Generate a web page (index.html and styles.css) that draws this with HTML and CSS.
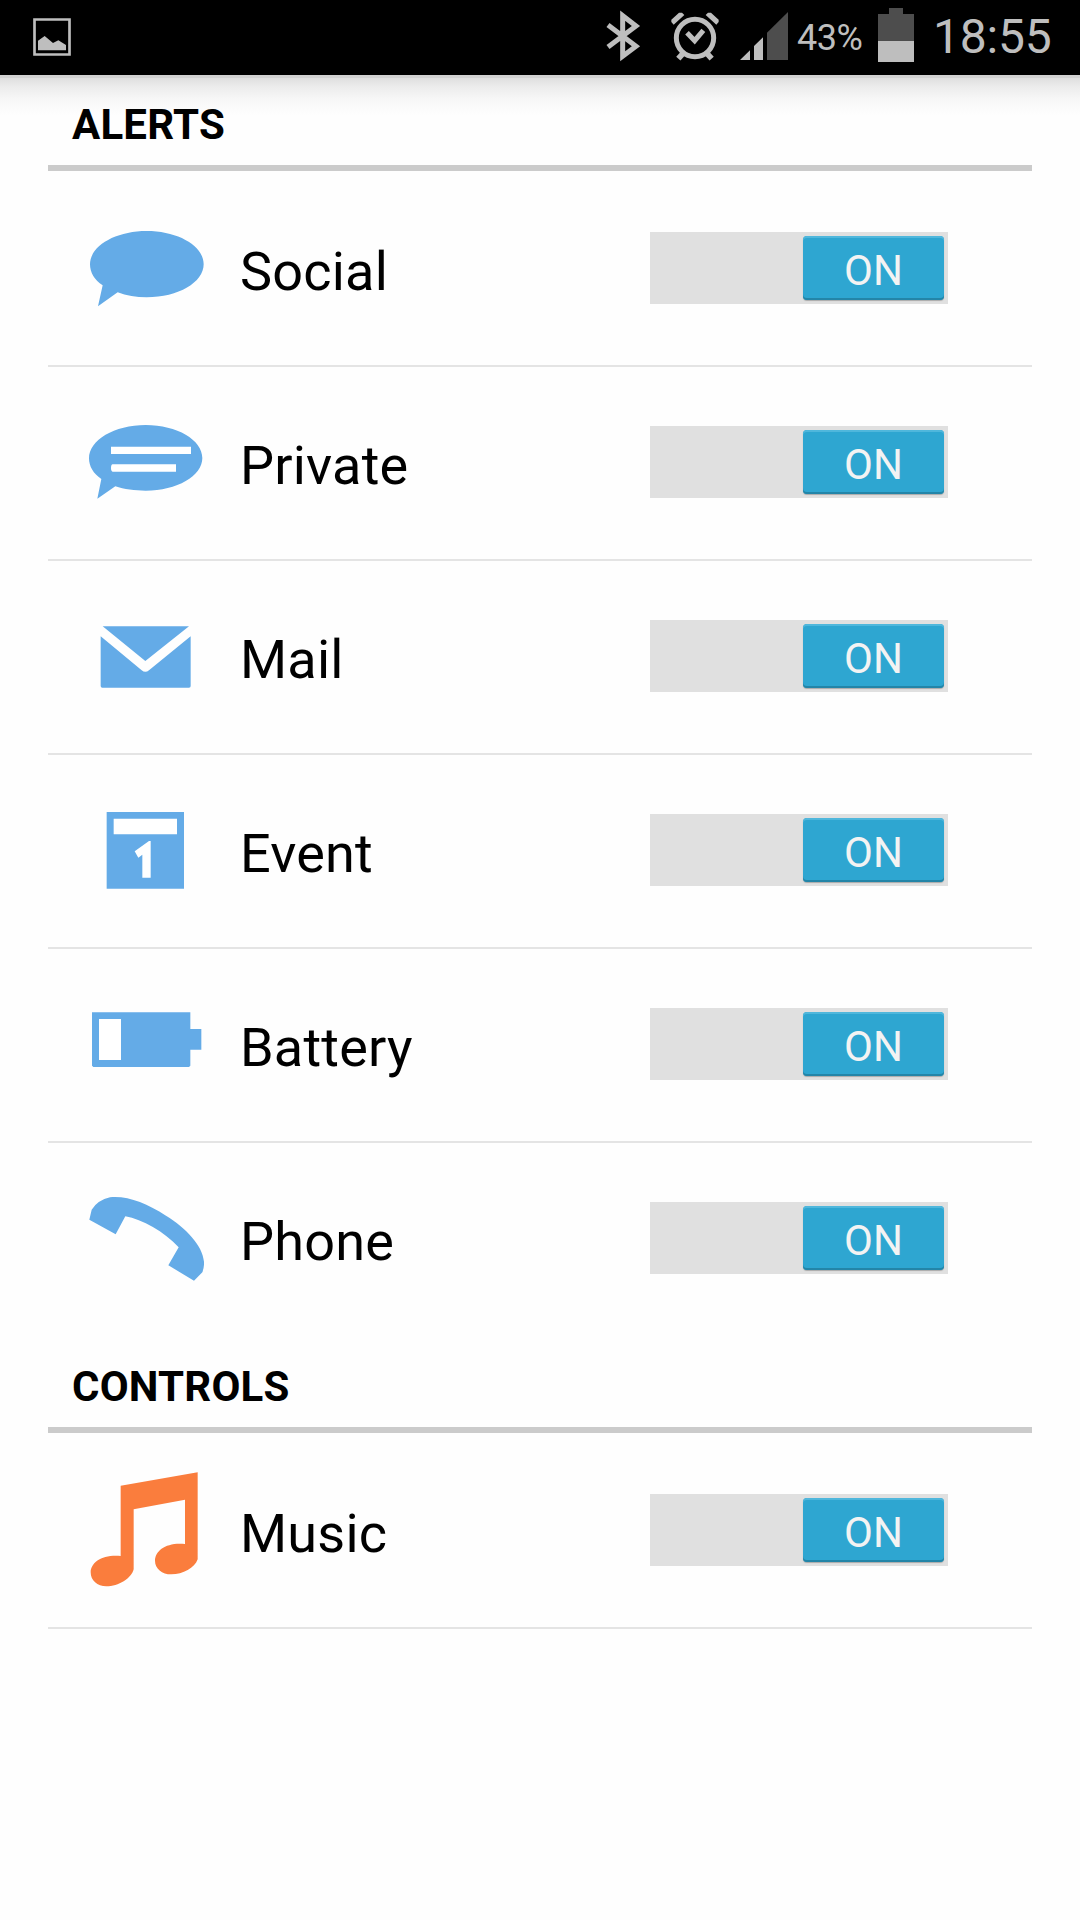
FILE: index.html
```html
<!DOCTYPE html>
<html lang="en">
<head>
<meta charset="utf-8">
<title>Alerts</title>
<link rel="stylesheet" href="styles.css">
</head>
<body>
<header class="status">
  <svg class="status-photo" viewBox="0 0 114 114"><path fill="none" stroke="#bebebe" stroke-width="8" d="M4.500 4.500H109.500V109.500H4.500Z"/><path fill="#bebebe" d="M15 68 35 54 60 75 76 67 99 81V97H15Z"/></svg>
  <svg class="status-icons" viewBox="0 0 600 225">
    <path fill="none" stroke="#bebebe" stroke-width="15" d="M54 75 138 139 98 169V47L138 78 54 141"/>
    <g fill="none" stroke="#bebebe">
      <circle cx="315" cy="114" r="56" stroke-width="15"/>
      <path stroke-width="15" d="M291 98 314 122 340 91"/>
      <path stroke-width="17" d="M282 157 265 176M348 157 365 176"/>
    </g>
    <path fill="#bebebe" d="M244 66V59L267 38H276L283 45 251 74ZM386 66V59L363 38H354L347 45 379 74ZM450 180 480 151V180ZM492 180V138L519 112V180Z"/>
    <path fill="#4d4d4d" d="M531 180V98L594 36V180Z"/>
  </svg>
  <span class="percent">43%</span>
  <svg class="status-battery" viewBox="0 0 36 54"><path fill="#4d4d4d" d="M0 6H11V0H25V6H36V33H0Z"/><path fill="#bebebe" d="M0 33H36V54H0Z"/></svg>
  <span class="clock">18:55</span>
</header>
<main class="page">
  <section class="group">
    <h2 class="heading">ALERTS</h2>
    <div class="row">
      <svg class="icon" viewBox="132 -81 360 576"><path d="M188 256C164 240 150 218 150 193C150 138 226 93 320 93C415 93 491 138 491 193C491 247 415 292 320 292C288 292 259 287 233 277L174 319Z"/></svg>
      <span class="label">Social</span><span class="switch"><span class="thumb">ON</span></span>
    </div>
    <div class="row">
      <svg class="icon" viewBox="132 -99 360 576"><path d="M184 237C160 221 147 199 147 175C147 120 223 75 317 75C411 75 487 120 487 174C487 228 411 272 317 272C285 272 252 268 226 259L172 296Z"/><path fill="#fff" d="M213 140H453V162H213ZM218 193H408V215H218Q213 214 213 204T218 193Z"/></svg>
      <span class="label">Private</span><span class="switch"><span class="thumb">ON</span></span>
    </div>
    <div class="row">
      <svg class="icon" viewBox="132 -117 360 576"><path d="M188 79H447L316 183ZM182 109 305 211Q316 220 327 211L452 109V258Q452 263 447 263H187Q182 263 182 258Z"/></svg>
      <span class="label">Mail</span><span class="switch"><span class="thumb">ON</span></span>
    </div>
    <div class="row">
      <svg class="icon" viewBox="132 -75 360 576"><path d="M200 96H432V326H200Z"/><path fill="#fff" d="M221 116H411V163H221ZM284 214 327 183H332V293H307V224L295 233Z"/></svg>
      <span class="label">Event</span><span class="switch"><span class="thumb">ON</span></span>
    </div>
    <div class="row">
      <svg class="icon" viewBox="132 -93 360 576"><path d="M156 97H451V147H484V209H451V257L447 261H160L156 257Z"/><path fill="#fff" d="M177 117H243V240H177Z"/></svg>
      <span class="label">Battery</span><span class="switch"><span class="thumb">ON</span></span>
    </div>
    <div class="row">
      <svg class="icon" viewBox="132 -81 360 576"><path d="M148 149 155 119Q174 90 210 82C264 77 319 100 378 137C437 173 488 226 492 275Q493 292 487 307L462 332 385 286 416 232C372 185 307 148 256 139L227 193Z"/></svg>
      <span class="label">Phone</span><span class="switch"><span class="thumb">ON</span></span>
    </div>
  </section>
  <section class="group">
    <h2 class="heading">CONTROLS</h2>
    <div class="row closed">
      <svg class="icon music" viewBox="132 225 360 576"><path d="M242 377 473 337V598C464 624 429 643 394 643C366 643 345 626 345 602C345 572 379 546 435 552V419L281 448V628C274 656 236 679 199 679C172 679 152 662 152 637C152 607 187 583 242 588Z"/></svg>
      <span class="label">Music</span><span class="switch"><span class="thumb">ON</span></span>
    </div>
  </section>
</main>
</body>
</html>
```
FILE: styles.css
```css
* { box-sizing: border-box; }
body {
  margin: 0;
  height: 1920px;
  overflow: hidden;
  background: #fefefe;
  color: #000;
  font-family: Roboto, "Liberation Sans", sans-serif;
}
svg { display: block; flex: none; }
.status {
  display: flex;
  align-items: flex-start;
  height: 75px;
  padding-left: 33px;
  background: #000;
  color: #bebebe;
  white-space: nowrap;
}
.status-photo { width: 38px; height: 38px; margin-top: 18px; }
.status-icons { width: 200px; height: 75px; margin-left: 519px; }
.percent {
  width: 68px;
  margin: 16px 0 0 7px;
  font-size: 36px;
  line-height: 44px;
  letter-spacing: -0.5px;
}
.status-battery { width: 36px; height: 54px; margin: 8px 0 0 13px; }
.clock {
  margin: 7px 0 0 19px;
  font-size: 48px;
  line-height: 60px;
  letter-spacing: -0.2px;
}
.page {
  height: 1845px;
  padding: 0 48px;
  background: linear-gradient(#d2d2d2 0 3px, #dfdfdf 3px, #ececec 12px, #f7f7f7 24px, #fefefe 40px);
}
.heading {
  height: 98px;
  margin: 0 0 2px;
  padding: 27px 24px 0;
  border-bottom: 6px solid #cbcbcb;
  font-size: 42px;
  line-height: 50px;
  font-weight: 700;
  letter-spacing: 0.2px;
}
.group:first-child .heading { height: 96px; padding-top: 25px; }
.row {
  display: flex;
  height: 194px;
  padding-left: 36px;
  border-bottom: 2px solid #e4e4e4;
}
.row:last-child:not(.closed) { height: 192px; border-bottom: 0; }
.icon { width: 120px; height: 192px; fill: #64abe7; }
.music { fill: #fa7d3d; }
.label {
  width: 410px;
  margin: 67px 0 0 36px;
  font-size: 54px;
  line-height: 64px;
  letter-spacing: 0.2px;
}
.switch {
  display: flex;
  width: 298px;
  height: 72px;
  margin-top: 59px;
  padding: 4px 4px 4px 153px;
  background: #e0e0e0;
}
.thumb {
  width: 141px;
  height: 64px;
  border-radius: 4px;
  background: #2ea6d1;
  box-shadow: inset 0 2px 0 #4fb7dc, inset 0 -2px 0 #2385a8, 0 1px 1px #aaa;
  color: #f3f3f3;
  font-size: 42px;
  line-height: 70px;
  text-align: center;
}
```
